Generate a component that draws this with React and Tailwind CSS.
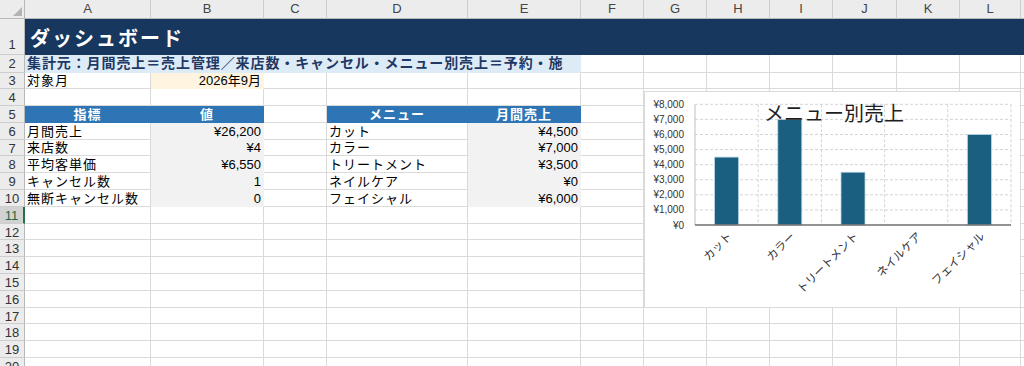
import clsx from "clsx";

const COLS = [
  "w-[126px]",
  "w-[113px]",
  "w-[63px]",
  "w-[141px]",
  "w-[113px]",
  "w-[63px]",
  "w-[63px]",
  "w-[63px]",
  "w-[63px]",
  "w-[64px]",
  "w-[63px]",
  "w-[61px]",
];
const LETTERS = ["A", "B", "C", "D", "E", "F", "G", "H", "I", "J", "K", "L"];

const GRAY = "bg-[#f2f2f2] border-[#f2f2f2]";
const BLUE = "bg-[#2e75b6] border-[#2e75b6] text-white font-bold justify-center tracking-[1px]";

const kpis = [
  ["月間売上", "¥26,200"],
  ["来店数", "¥4"],
  ["平均客単価", "¥6,550"],
  ["キャンセル数", "1"],
  ["無断キャンセル数", "0"],
];

const menu = [
  ["カット", 4500],
  ["カラー", 7000],
  ["トリートメント", 3500],
  ["ネイルケア", 0],
  ["フェイシャル", 6000],
];

function Cell({ col, fill, className, children }) {
  return (
    <div
      className={clsx(
        COLS[col],
        "shrink-0 border-r border-b flex items-center overflow-hidden whitespace-nowrap px-[2px] pt-[1px]",
        fill ?? "border-[#dadada] bg-white",
        className
      )}
    >
      {children}
    </div>
  );
}

function Tail() {
  return <div className="flex-1 border-b border-[#dadada] bg-white" />;
}

function Blanks({ from }) {
  return (
    <>
      {COLS.slice(from).map((_, i) => (
        <Cell key={i} col={from + i} />
      ))}
      <Tail />
    </>
  );
}

function Row({ n, h = "h-[16.8px]", active, bottom, children }) {
  return (
    <div className={clsx("flex", h)}>
      <div
        className={clsx(
          "w-[25px] shrink-0 flex justify-center border-b border-[#cdcdcd] text-[13px] leading-none",
          bottom ? "items-end pb-[3px]" : "items-center pt-[1px]",
          active
            ? "bg-[#d2d2d2] text-[#1c6a3d] border-r-2 border-r-[#217346]"
            : "bg-[#ececec] text-[#333] border-r border-r-[#b8b8b8]"
        )}
      >
        {n}
      </div>
      {children}
    </div>
  );
}

function Chart() {
  const x0 = 50;
  const x1 = 366;
  const y0 = 133;
  const step = (133 - 12.3) / 8;
  const cw = (x1 - x0) / 5;
  return (
    <svg width="377" height="217" className="block">
      {[1, 2, 3, 4, 5, 6, 7, 8].map((k) => (
        <line
          key={k}
          x1={x0}
          x2={x1}
          y1={y0 - k * step}
          y2={y0 - k * step}
          stroke="#d4d4d4"
          strokeDasharray="3 2"
        />
      ))}
      {[1, 2, 3, 4, 5].map((i) => (
        <line
          key={i}
          x1={x0 + i * cw}
          x2={x0 + i * cw}
          y1={y0 - 8 * step}
          y2={y0}
          stroke="#d4d4d4"
          strokeDasharray="3 2"
        />
      ))}
      <line x1={x0} x2={x0} y1={y0 - 8 * step} y2={y0} stroke="#bfbfbf" />
      {menu.map(([name, v], i) => {
        const cx = x0 + cw * (i + 0.5);
        const h = (v / 1000) * step;
        return (
          <g key={name}>
            {v > 0 && (
              <rect
                x={cx - 12}
                y={y0 - h}
                width="24"
                height={h}
                fill="#1a5e80"
                stroke="#b9d4e4"
                strokeWidth="0.8"
              />
            )}
            <text
              x={cx + 6}
              y={145}
              textAnchor="end"
              transform={`rotate(-45 ${cx + 6} 145)`}
              fontSize="11.5"
              fill="#333"
              fontFamily="'Noto Sans CJK JP', sans-serif"
            >
              {name}
            </text>
          </g>
        );
      })}
      <line x1={x0} x2={x1} y1={y0} y2={y0} stroke="#6f6f6f" strokeWidth="1.5" />
      {[0, 1, 2, 3, 4, 5, 6, 7, 8].map((k) => (
        <text
          key={k}
          x="39"
          y={y0 - k * step + 3.5}
          textAnchor="end"
          fontSize="10"
          fill="#333"
          fontFamily="'Liberation Sans', sans-serif"
        >
          {k === 0 ? "¥0" : `¥${k},000`}
        </text>
      ))}
      <text
        x="189"
        y="29"
        textAnchor="middle"
        fontSize="20"
        fill="#1e1e1e"
        fontFamily="'Noto Sans CJK JP', sans-serif"
      >
        メニュー別売上
      </text>
    </svg>
  );
}

export default function App() {
  return (
    <div className="relative h-[366px] w-[1024px] overflow-hidden bg-white text-[13px] text-black font-[family-name:'Liberation_Sans','Noto_Sans_CJK_JP',sans-serif]">
      {/* column headers */}
      <div className="flex h-[19px]">
        <div className="relative w-[25px] shrink-0 bg-[#ececec] border-r border-b border-[#b8b8b8]">
          <svg width="25" height="19" className="absolute inset-0">
            <polygon points="22,7 22,16 13,16" fill="#b4b4b4" />
          </svg>
        </div>
        {LETTERS.map((l, i) => (
          <div
            key={l}
            className={clsx(
              COLS[i],
              "shrink-0 flex items-center justify-center bg-[#ececec] border-r border-r-[#cdcdcd] border-b border-b-[#b8b8b8] text-[13px] text-[#444]"
            )}
          >
            {l}
          </div>
        ))}
        <div className="flex-1 bg-[#ececec] border-b border-[#b8b8b8]" />
      </div>

      <Row n={1} h="h-[36px]" bottom>
        <div className="flex-1 flex items-end bg-[#17375e] pb-[6px] pl-[5px]">
          <span className="text-[20px] font-bold text-white tracking-[2px] leading-none">
            ダッシュボード
          </span>
        </div>
      </Row>

      <Row n={2} h="h-[17.5px]">
        <div className="w-[556px] shrink-0 flex items-center overflow-hidden whitespace-nowrap bg-[#ddebf7] border-b border-[#ddebf7] px-[2px] pt-[1px] text-[14px] font-bold text-[#1f3864] tracking-[0.9px]">
          集計元：月間売上＝売上管理／来店数・キャンセル・メニュー別売上＝予約・施
        </div>
        <Blanks from={5} />
      </Row>

      <Row n={3}>
        <Cell col={0} className="tracking-[1px]">対象月</Cell>
        <Cell col={1} fill="bg-[#fef4df] border-[#fef4df]" className="justify-end">
          2026年9月
        </Cell>
        <Blanks from={2} />
      </Row>

      <Row n={4}>
        <Blanks from={0} />
      </Row>

      <Row n={5}>
        <Cell col={0} fill={BLUE}>指標</Cell>
        <Cell col={1} fill={BLUE}>値</Cell>
        <Cell col={2} />
        <Cell col={3} fill={BLUE}>メニュー</Cell>
        <Cell col={4} fill={BLUE}>月間売上</Cell>
        <Blanks from={5} />
      </Row>

      {kpis.map(([label, value], i) => (
        <Row key={label} n={6 + i}>
          <Cell col={0} className="tracking-[1px]">{label}</Cell>
          <Cell col={1} fill={GRAY} className="justify-end">
            {value}
          </Cell>
          <Cell col={2} />
          <Cell col={3} className="tracking-[1px]">{menu[i][0]}</Cell>
          <Cell col={4} fill={GRAY} className="justify-end">
            {menu[i][1] === 0 ? "¥0" : `¥${menu[i][1].toLocaleString("en-US")}`}
          </Cell>
          <Blanks from={5} />
        </Row>
      ))}

      {[11, 12, 13, 14, 15, 16, 17, 18, 19, 20].map((n) => (
        <Row key={n} n={n} active={n === 11}>
          <Blanks from={0} />
        </Row>
      ))}

      {/* chart object floating over G4:L16 */}
      <div className="absolute left-[644px] top-[91px] w-[377px] h-[217px] bg-white border border-[#d9d9d9]">
        <Chart />
      </div>
    </div>
  );
}
